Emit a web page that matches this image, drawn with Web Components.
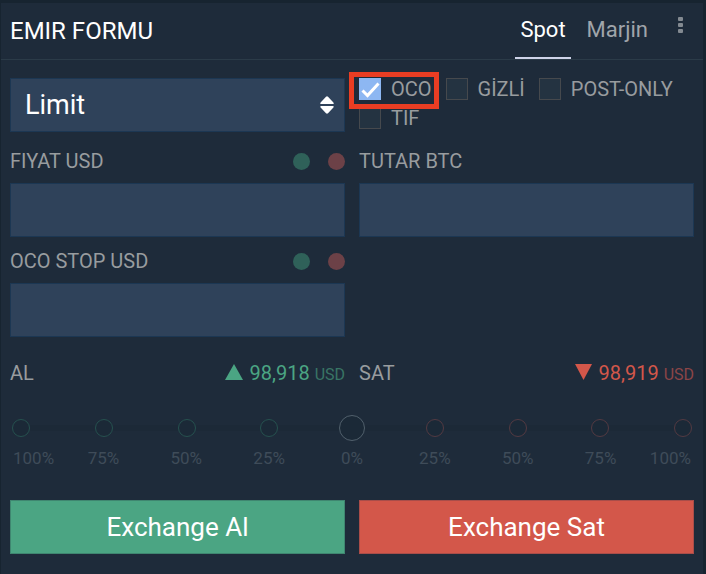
<!DOCTYPE html>
<html lang="tr">
<head>
<meta charset="utf-8">
<meta name="viewport" content="width=device-width, initial-scale=1">
<title>Emir Formu</title>
<style>
  body {
    --panel: #1e2b3a;
    --field: #2f425a;
    --field-border: #1c3753;
    --line: #2b3b48;
    --muted: #989c9f;
    --green: #4ba583;
    --red: #d3574a;
    margin: 0;
    background: #172430;
    color: var(--muted);
    font-family: Roboto, "Liberation Sans", sans-serif;
    font-size: 20px;
    line-height: 24px;
  }
</style>
</head>
<body>
<order-panel>
  <span slot="title">EMIR FORMU</span>
  <order-tab slot="tabs" active>Spot</order-tab>
  <order-tab slot="tabs">Marjin</order-tab>

  <order-type></order-type>
  <check-group>
    <check-option checked highlighted>OCO</check-option>
    <check-option>GİZLİ</check-option>
    <check-option>POST-ONLY</check-option>
    <check-option>TIF</check-option>
  </check-group>

  <order-field dots>FIYAT USD</order-field>
  <order-field>TUTAR BTC</order-field>
  <order-field dots class="row-start">OCO STOP USD</order-field>

  <price-quote slot="quotes" side="buy" price="98,918" unit="USD">AL</price-quote>
  <price-quote slot="quotes" side="sell" price="98,919" unit="USD">SAT</price-quote>
  <amount-slider slot="slider"></amount-slider>
  <exchange-button slot="actions" side="buy">Exchange Al</exchange-button>
  <exchange-button slot="actions" side="sell">Exchange Sat</exchange-button>
</order-panel>

<script>
// Attach an open shadow root and fill it with the given markup
function render(el, html) {
  if (el.shadowRoot) return el.shadowRoot;
  const tpl = document.createElement('template');
  tpl.innerHTML = html;
  const root = el.attachShadow({ mode: 'open' });
  root.appendChild(tpl.content.cloneNode(true));
  return root;
}

class OrderPanel extends HTMLElement {
  connectedCallback() {
    render(this, `
<style>
  :host {
    display: block;
    box-sizing: border-box;
    min-height: calc(100vh - 3px);
    margin: 3px 3px 0 1px;
    padding-bottom: 18px;
    background: var(--panel);
  }
  header {
    display: flex;
    align-items: stretch;
    height: 56px;
    padding: 0 9px;
    border-bottom: 1px solid var(--line);
  }
  h1 {
    flex: 1;
    margin: 0;
    font-size: 24px;
    font-weight: 400;
    line-height: 56px;
    color: #fff;
  }
  nav { display: flex; gap: 11px; }
  .more {
    align-self: start;
    margin: 13px 0 0 14px;
    padding: 0 11px;
    border: 0;
    background: none;
    cursor: pointer;
  }
  .more svg { display: block; }
  .grid {
    display: grid;
    grid-template-columns: 1fr 1fr;
    column-gap: 14px;
    padding: 0 9px;
  }
  .form { padding-top: 18px; row-gap: 9px; }
  .quotes { padding-top: 24px; }
  .actions { padding-top: 30px; }
  ::slotted(.row-start) { grid-column: 1; }
</style>
<header>
  <h1><slot name="title"></slot></h1>
  <nav><slot name="tabs"></slot></nav>
  <button class="more" type="button" aria-label="Menü">
    <svg width="5" height="18" viewBox="0 0 5 18" fill="#838a91">
      <rect y="1" width="5" height="4" rx="1"/>
      <rect y="7" width="5" height="4" rx="1"/>
      <rect y="13" width="5" height="4" rx="1"/>
    </svg>
  </button>
</header>
<div class="grid form"><slot></slot></div>
<div class="grid quotes"><slot name="quotes"></slot></div>
<slot name="slider"></slot>
<div class="grid actions"><slot name="actions"></slot></div>`);
  }
}

class OrderTab extends HTMLElement {
  connectedCallback() {
    render(this, `
<style>
  :host { display: flex; }
  button {
    padding: 0 5px;
    border: 0;
    border-bottom: 2px solid transparent;
    background: none;
    font: inherit;
    font-size: 22px;
    color: #a0a5aa;
    cursor: pointer;
  }
  :host([active]) button { color: #fff; border-color: #ced3e8; }
</style>
<button type="button"><slot></slot></button>`);
  }
}

class OrderType extends HTMLElement {
  connectedCallback() {
    render(this, `
<style>
  :host { display: grid; align-items: center; padding-bottom: 5px; }
  select, svg { grid-area: 1 / 1; }
  select {
    appearance: none;
    width: 100%;
    height: 54px;
    padding: 0 40px 0 14px;
    border: 1px solid var(--field-border);
    border-radius: 0;
    background: var(--field);
    font: inherit;
    font-size: 27px;
    color: #fff;
  }
  svg { justify-self: end; margin-right: 11px; pointer-events: none; }
</style>
<select aria-label="Emir tipi"><option>Limit</option></select>
<svg width="14" height="18" viewBox="0 0 14 18" fill="#fff">
  <path d="M6 .7 .6 6.4Q-.3 8 1.200 8H12.800Q14.300 8 13.400 6.400L8 .7Q7-.2 6 .7Z"/>
  <path d="M6 17.300.6 11.600Q-.3 10 1.200 10H12.800Q14.300 10 13.400 11.600L8 17.300Q7 18.200 6 17.300Z"/>
</svg>`);
  }
}

class CheckGroup extends HTMLElement {
  connectedCallback() {
    render(this, `
<style>
  :host {
    display: flex;
    flex-wrap: wrap;
    align-content: flex-start;
    gap: 7px 14px;
  }
</style>
<slot></slot>`);
  }
}

class CheckOption extends HTMLElement {
  connectedCallback() {
    const root = render(this, `
<style>
  :host { display: block; position: relative; }
  label { display: flex; align-items: center; gap: 10px; height: 22px; }
  .box { display: grid; }
  input, svg { grid-area: 1 / 1; }
  input {
    appearance: none;
    box-sizing: border-box;
    width: 22px;
    height: 22px;
    margin: 0;
    border: 1px solid #46494d;
    background: #243341;
  }
  input:checked { border-color: #8db7f2; background: #8db7f2; }
  svg { display: none; pointer-events: none; }
  input:checked + svg { display: block; }
  :host([highlighted])::after {
    content: "";
    position: absolute;
    inset: -6px -7px -9px -10px;
    border: 5px solid #e93d23;
    pointer-events: none;
    z-index: 1;
  }
</style>
<label>
  <span class="box">
    <input type="checkbox">
    <svg width="22" height="22" viewBox="0 0 22 22" fill="none" stroke="#fff" stroke-width="3">
      <path d="M3.500 12.500 8.500 17.500 19.500 5.500"/>
    </svg>
  </span>
  <slot></slot>
</label>`);
    root.querySelector('input').checked = this.hasAttribute('checked');
  }
}

class OrderField extends HTMLElement {
  connectedCallback() {
    render(this, `
<style>
  :host { display: block; }
  .head { display: flex; align-items: center; height: 30px; margin-bottom: 7px; }
  label { flex: 1; }
  .dots { display: none; gap: 18px; }
  :host([dots]) .dots { display: flex; }
  button {
    width: 17px;
    height: 17px;
    padding: 0;
    border: 0;
    border-radius: 50%;
    background: #2f6159;
    cursor: pointer;
  }
  button.ask { background: #6c4147; }
  input {
    display: block;
    box-sizing: border-box;
    width: 100%;
    height: 54px;
    padding: 0 15px;
    border: 1px solid var(--field-border);
    background: var(--field);
    font: inherit;
    color: #fff;
  }
</style>
<div class="head">
  <label for="value"><slot></slot></label>
  <div class="dots">
    <button class="bid" type="button" aria-label="En iyi alış"></button>
    <button class="ask" type="button" aria-label="En iyi satış"></button>
  </div>
</div>
<input id="value" type="text" inputmode="decimal">`);
  }
}

class PriceQuote extends HTMLElement {
  connectedCallback() {
    const root = render(this, `
<style>
  :host { display: flex; align-items: baseline; color: var(--green); }
  :host([side="sell"]) { color: var(--red); }
  .name { flex: 1; color: var(--muted); }
  svg { margin-right: 6px; }
  .down { display: none; }
  :host([side="sell"]) .up { display: none; }
  :host([side="sell"]) .down { display: block; }
  .unit { margin-left: 5px; font-size: 16px; color: #397565; }
  :host([side="sell"]) .unit { color: #8b4547; }
</style>
<span class="name"><slot></slot></span>
<svg class="up" width="18" height="16" fill="currentColor"><path d="M9 0 18 16H0Z"/></svg>
<svg class="down" width="17" height="16" fill="currentColor"><path d="M0 0H17L8.500 16Z"/></svg>
<span class="price"></span>
<span class="unit"></span>`);
    root.querySelector('.price').textContent = this.getAttribute('price');
    root.querySelector('.unit').textContent = this.getAttribute('unit');
  }
}

const STEPS = [-100, -75, -50, -25, 0, 25, 50, 75, 100];

class AmountSlider extends HTMLElement {
  connectedCallback() {
    const marks = STEPS.map(s => `<i class="${s < 0 ? 'buy' : s > 0 ? 'sell' : ''}"></i>`).join('');
    const labels = STEPS.map(s => `<span>${Math.abs(s)}%</span>`).join('');
    render(this, `
<style>
  :host { display: block; padding: 28px 9px 0; }
  .rail { display: grid; align-items: center; }
  .marks, input { grid-area: 1 / 1; }
  .marks {
    display: flex;
    justify-content: space-between;
    padding: 0 2px;
    background: linear-gradient(#1c2937, #1c2937) center / 96% 6px no-repeat;
  }
  i {
    box-sizing: border-box;
    width: 18px;
    height: 18px;
    border-radius: 50%;
  }
  .buy { border: 1px solid #26514f; background: #1b2937; }
  .sell { border: 1px solid #533a42; background: #1b2937; }
  input {
    appearance: none;
    width: 100%;
    height: 26px;
    margin: 0;
    background: none;
  }
  input::-webkit-slider-thumb {
    appearance: none;
    box-sizing: border-box;
    width: 26px;
    height: 26px;
    border: 1px solid #51606c;
    border-radius: 50%;
    background: #1b2937;
  }
  .labels {
    display: grid;
    grid-template-columns: 49px repeat(7, 1fr) 49px;
    margin-top: 5px;
    padding: 0 3px;
    font-size: 17px;
    text-align: center;
    color: #3f4c59;
  }
  .labels span:first-child { text-align: left; }
  .labels span:last-child { text-align: right; }
</style>
<div class="rail">
  <div class="marks">${marks}</div>
  <input type="range" min="-100" max="100" value="0" aria-label="Miktar">
</div>
<div class="labels">${labels}</div>`);
  }
}

class ExchangeButton extends HTMLElement {
  connectedCallback() {
    render(this, `
<style>
  :host { display: block; }
  button {
    width: 100%;
    height: 54px;
    padding: 0;
    border: 1px solid #3f8670;
    background: var(--green);
    font: inherit;
    font-size: 26px;
    color: #fff;
    cursor: pointer;
  }
  :host([side="sell"]) button { border-color: #a94d49; background: var(--red); }
</style>
<button type="button"><slot></slot></button>`);
  }
}

customElements.define('order-panel', OrderPanel);
customElements.define('order-tab', OrderTab);
customElements.define('order-type', OrderType);
customElements.define('check-group', CheckGroup);
customElements.define('check-option', CheckOption);
customElements.define('order-field', OrderField);
customElements.define('price-quote', PriceQuote);
customElements.define('amount-slider', AmountSlider);
customElements.define('exchange-button', ExchangeButton);
</script>
</body>
</html>
